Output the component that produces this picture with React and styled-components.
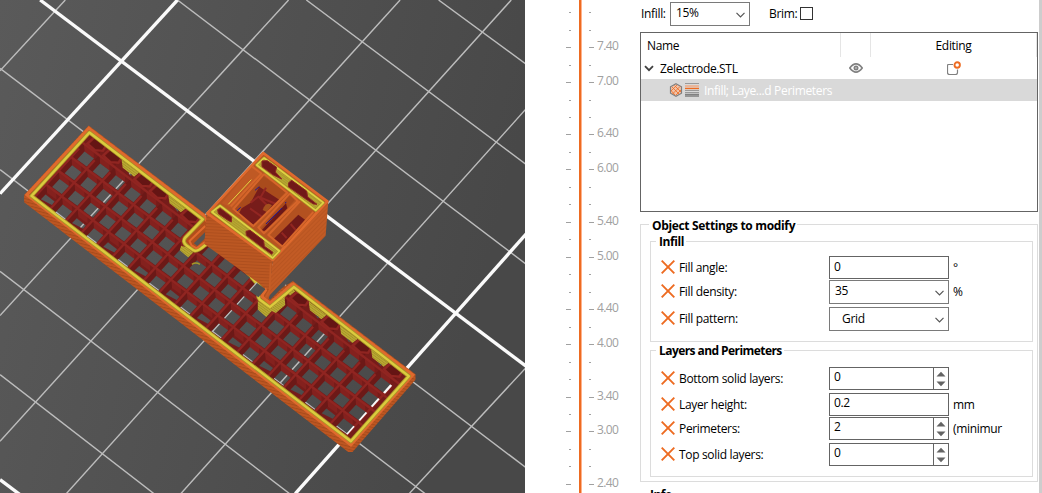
import React from "react";
import styled, { createGlobalStyle } from "styled-components";

const Global = createGlobalStyle`
  html, body { margin: 0; padding: 0; }
  body { font-family: "Open Sans", "Noto Sans", sans-serif; font-size: 12px; letter-spacing: -0.33px; color: #000; background: #fff; }
  * { box-sizing: border-box; }
`;
const Page = styled.div`display: flex; width: 1042px; height: 493px; overflow: hidden; background: #fff;`;
const Viewport = styled.div`flex: 0 0 525px; height: 493px; svg { display: block; }`;

/* ---------- layer slider ---------- */
const Slider = styled.div`flex: 0 0 115px; display: flex; height: 493px; padding-left: 41px;`;
const TickColumn = styled.div`
  display: flex; flex-direction: column; padding-top: 12px;
  width: ${p => (p.$left ? 13 : 51)}px; padding-left: ${p => (p.$left ? 0 : 7)}px;
`;
const TickRow = styled.div`
  flex: none; display: flex; align-items: flex-start; height: ${p => p.$h}px; padding-right: ${p => (p.$left ? 8 : 0)}px;
  justify-content: ${p => (p.$left ? "flex-end" : "flex-start")};
`;
const Tick = styled.i`flex: none; width: ${p => (p.$major ? 5 : 2)}px; height: 1px; background: #a0a0a0;`;
const TickLabel = styled.span`margin: -9px 0 0 3px; line-height: 16px; height: 16px; color: #a0a0a0; letter-spacing: -0.6px;`;
const Track = styled.div`flex: 0 0 3px; background: linear-gradient(90deg, #ed6b21 67%, #ffb28c 67%);`;

/* ---------- side panel ---------- */
const Panel = styled.div`flex: 0 0 398px; display: flex; flex-direction: column; height: 493px;`;
const Scrollbar = styled.div`flex: none; width: 3px; margin-left: 1px; background: #cdcdcd;`;
const TopBar = styled.div`display: flex; align-items: center; height: 32px; padding: 0 0 5px 1px; flex: none;`;
const TopLabel = styled.span`width: ${p => p.$w}px; padding-left: ${p => p.$pl || 0}px; white-space: nowrap;`;
const Box = styled.div`
  display: flex; align-items: center; flex: none; width: ${p => p.$w || 120}px; height: ${p => p.$h || 23}px;
  border: 1px solid ${p => (p.$combo ? "#7a7a7a" : "#646464")}; background: #fff; padding-left: ${p => p.$pl || 4}px;
`;
const Value = styled.span`flex: 1; line-height: 16px; margin-top: ${p => p.$dy || 0}px;`;
const Arrow = styled.svg`width: 9px; height: 6px; margin-right: 4px; margin-top: 2px;`;
const Check = styled.div`width: 13px; height: 13px; border: 1px solid #333; background: #fff;`;

const Tree = styled.div`flex: none; height: 180px; border: 1px solid #646464; display: flex; flex-direction: column;`;
const TreeRow = styled.div`
  display: flex; align-items: center; flex: none; height: ${p => p.$h}px;
  background: ${p => (p.$selected ? "#d9d9d9" : "#fff")}; color: ${p => (p.$selected ? "#fff" : "#000")};
`;
const NameCell = styled.div`flex: 0 0 200px; display: flex; align-items: center; height: 100%; white-space: nowrap; padding-left: ${p => p.$pl}px; border-right: 1px solid ${p => (p.$head ? "#e5e5e5" : "transparent")};`;
const EyeCell = styled.div`flex: 0 0 30px; display: flex; align-items: center; justify-content: center; height: 100%; border-right: 1px solid ${p => (p.$head ? "#e5e5e5" : "transparent")};`;
const EditCell = styled.div`flex: 1; display: flex; align-items: center; justify-content: center; height: 100%; border-right: 1px solid ${p => (p.$head ? "#e5e5e5" : "transparent")};`;
const Chevron = styled.svg`width: 10px; height: 7px; margin-right: 6px; flex: none;`;
const ModifierIcons = styled.svg`width: 30px; height: 14px; margin-right: 5px; flex: none;`;

const Group = styled.section`
  position: relative; flex: none; border: 1px solid #dcdcdc; height: ${p => p.$h}px;
  margin: ${p => p.$m || "0"}; padding-top: ${p => p.$pt || 0}px;
`;
const GroupTitle = styled.h3`
  position: absolute; left: ${p => p.$x}px; top: ${p => p.$top || -9}px; margin: 0; padding: 0 2px 0 3px; background: #fff;
  font-size: 12px; font-weight: 700; line-height: 17px; white-space: nowrap; letter-spacing: ${p => p.$ls || "-0.5px"};
`;
const Field = styled.div`display: flex; align-items: flex-start; height: ${p => p.$h}px; padding-left: 10px;`;
const FieldLabel = styled.span`flex: 0 0 154px; padding-left: 4px; line-height: 24px; white-space: nowrap;`;
const Cross = styled.svg`flex: none; width: 14px; height: 14px; margin-top: 4px;`;
const Unit = styled.span`margin-left: 4px; line-height: 24px; width: 50px; overflow: hidden; white-space: nowrap;`;
const Spin = styled.div`width: 15px; height: 100%; border-left: 1px solid #646464; display: flex; align-items: center; justify-content: center;`;
const NextTitle = styled.h3`margin: 4px 0 0 10px; font-size: 12px; line-height: 17px; font-weight: 700; letter-spacing: -0.5px;`;

const Down = () => <Arrow viewBox="0 0 9 6"><path d="M.5 .8 4.5 4.8 8.5 .8" fill="none" stroke="#555" strokeWidth="1.2" /></Arrow>;
const Remove = () => <Cross viewBox="0 0 14 14"><path d="M.7.7 13.3 13.3M13.3.7.7 13.3" stroke="#ed6b21" strokeWidth="1.9" /></Cross>;

const ticks = [[12], [30], [47, "7.40"], [65], [82, "7.00"], [100], [117], [134, "6.40"], [152], [169, "6.00"], [187], [204], [222, "5.40"], [239], [257, "5.00"], [274], [292], [309, "4.40"], [327], [344, "4.00"], [362], [379], [397, "3.40"], [414], [431, "3.00"], [449], [466], [484, "2.40"], [493]];
const Ticks = ({ left }) => (
  <TickColumn $left={left}>
    {ticks.slice(0, -1).map(([y, label], i) => (
      <TickRow key={y} $h={ticks[i + 1][0] - y} $left={left}>
        <Tick $major={!!label} />
        {!left && label && <TickLabel>{label}</TickLabel>}
      </TickRow>
    ))}
  </TickColumn>
);

const NumberField = ({ label, value, unit, h, spin, combo, boxH, pl, dy = 0 }) => (
  <Field $h={h}>
    <Remove />
    <FieldLabel>{label}</FieldLabel>
    <Box $h={boxH} $combo={combo} $pl={pl}>
      <Value $dy={dy}>{value}</Value>
      {combo && <Down />}
      {spin && <Spin><svg width="10" height="16" viewBox="0 0 10 16"><path d="M.5 5.5 5 .8 9.500 5.500zM.5 10.500 5 15.200 9.500 10.500z" fill="#646464" /></svg></Spin>}
    </Box>
    {unit && <Unit>{unit}</Unit>}
  </Field>
);

/* ---------- 3D preview ---------- */
const cellAt = (i, j) => [256 + 46.6 * i - 37.3 * j, 477 + 35.6 * i + 41 * j];
const poly = (c, pts) => pts.map(([x, y]) => `${(c[0] + x).toFixed(1)},${(c[1] + y).toFixed(1)}`).join(" ");
const cells = [];
for (let i = 0; i < 20; i++) for (let j = 0; j < 4; j++) if (!((i === 7 || i === 12) && j === 0)) cells.push([i, j]);
const HOLE = [[-3.5, -23], [24.5, -2], [3, 22], [-25.5, 1]];
const END_HOLE = [[-3.5, -23], [30, 2], [8.5, 26], [-25.5, 1]];
const LOW_HOLE = [[-8, -17], [19, 4], [11, 14], [-22, -3]];
const holeAt = (i, j) => (i === 19 ? END_HOLE : j === 3 && i % 2 === 0 ? LOW_HOLE : HOLE);
const pockets = [0, 1, 3, 4, 6, 13, 15, 17, 19];
const OUTER = "M265 376 L612 640 L640 700 L800 850 L800 890 L875 842 L1241 1121 L1241 1138 L1053 1354 L1040 1354 L72 606 L72 584Z";
const RIM = "M265 384 L609 646 L640 700 L800 850 L794 868 L782 888 L806 908 L876 851 L1233 1123 L1048 1333 L80 584Z";
const INNER = "M267 397 L606 657 L554 711 Q543 724 558 736 L578 750 Q588 756 612 735 L650 715 L782 866 L773 876 Q768 888 776 898 L806 920 L878 860 L1221 1127 L1048 1322 L94 587Z";
const thin = [
  [0, 205, 1575, 1404], [530, 0, 1575, 794], [915, 0, 1575, 495], [1310, 0, 1575, 195], [0, 508, 1270, 1479], [0, 813, 865, 1479], [0, 1122, 460, 1479],
  [195, 0, 0, 212], [862, 0, 0, 945], [1195, 0, 0, 1322], [1527, 0, 198, 1479], [1575, 322, 540, 1479], [1575, 1097, 1222, 1479],
];
const thick = [[120, 0, 1575, 1100], [530, 0, 0, 580], [1575, 697, 882, 1479], [0, 1437, 60, 1482]];

const Scene = () => (
  <svg width="525" height="493" viewBox="0 0 525 493">
    <defs>
      <linearGradient id="bed" x1="0" x2="1" y1="0" y2=".25"><stop offset="0" stopColor="#5a5a5a" /><stop offset="1" stopColor="#484848" /></linearGradient>
      <pattern id="sideA" width="12" height="9" patternUnits="userSpaceOnUse" patternTransform="rotate(14)"><rect width="12" height="9" fill="#bd5622" /><rect width="12" height="3" fill="#a84b1b" /></pattern>
      <pattern id="faceL" width="9" height="9" patternUnits="userSpaceOnUse" patternTransform="rotate(3)"><rect width="9" height="9" fill="#bb5722" /><rect width="9" height="3" fill="#ae4f1e" /></pattern>
      <pattern id="faceR" width="9" height="9" patternUnits="userSpaceOnUse" patternTransform="rotate(-45)"><rect width="9" height="9" fill="#c25b25" /><rect width="9" height="3" fill="#b85521" /></pattern>
      <pattern id="yel" width="6" height="6" patternUnits="userSpaceOnUse" patternTransform="rotate(36)"><rect width="6" height="6" fill="#b9a832" /><rect width="6" height="2" fill="#a39227" /></pattern>
      <mask id="holes" maskUnits="userSpaceOnUse" x="0" y="0" width="1575" height="1479">
        <rect width="1575" height="1479" fill="#fff" />
        {cells.map(([i, j]) => <polygon key={i + "-" + j} points={poly(cellAt(i, j), holeAt(i, j))} fill="#000" />)}
        {[2, 5, 14, 16, 18].map(i => <polygon key={i} points={poly(cellAt(i, -1), [[-5, 8], [8, 16], [4, 20]])} fill="#000" />)}
      </mask>
      <clipPath id="inside"><path d={INNER} /></clipPath>
    </defs>
    <rect width="525" height="493" fill="url(#bed)" />
    <g transform="scale(.3348 .3338)">
      {thin.map((l, k) => <line key={k} x1={l[0]} y1={l[1]} x2={l[2]} y2={l[3]} stroke="#bdbdbd" strokeWidth="4.200" />)}
      {thick.map((l, k) => <line key={k} x1={l[0]} y1={l[1]} x2={l[2]} y2={l[3]} stroke="#fafafa" strokeWidth="10" />)}
      <g mask="url(#holes)">
        <path d={OUTER} fill="url(#sideA)" />
        <path d={RIM} fill="#b04e1c" stroke="#df6a2d" strokeWidth="9" />
        <path d={INNER} fill="#761c1a" />
        <g clipPath="url(#inside)">
          {[2, 5, 7, 12, 14, 16, 18].map(i => <polygon key={i} points={poly(cellAt(i, -1), [[-24, -32], [30, 9], [14, 22], [-20, -5]])} fill="url(#yel)" />)}
          {cells.map(([i, j]) => (
            <g key={i + "-" + j}>
              <polygon points={poly(cellAt(i, j), [[-6, -49], [24, -26], [24.5, -1.5], [-3.5, -22]])} fill="#84211e" />
              <polygon points={poly(cellAt(i, j), [[-6, -49], [-3.5, -22], [-25.5, 1.5], [-43, -8]])} fill="#6c1917" />
            </g>
          ))}
          {pockets.map(i => <polygon key={i} points={poly(cellAt(i, -1), [[-6, -24], [24, -2], [4, 22], [-28, -2]])} fill="#651514" />)}
          <g stroke="#902521" strokeWidth="7" fill="none">
            {[-1, 0, 1, 2, 3].map(j => { const a = cellAt(-2, j), b = cellAt(21, j); return <line key={j} x1={a[0] - 14.5} y1={a[1] + 16} x2={b[0] - 14.5} y2={b[1] + 16} />; })}
            {Array.from({ length: 21 }, (_, k) => k - 1).map(i => { const a = cellAt(i, -0.25), b = cellAt(i, 4.3); return <line key={i} x1={a[0] + 17.5} y1={a[1] + 13.5} x2={b[0] + 17.5} y2={b[1] + 13.5} />; })}
            {pockets.map(i => <polygon key={i} points={poly(cellAt(i, -1), [[0, -24], [26, -4], [14, 16], [-10, 14], [-32, -6], [-14, -22]])} strokeWidth="7" />)}
          </g>
        </g>
        <path d={INNER} fill="none" stroke="#a79828" strokeWidth="12" strokeLinejoin="round" />
        <path d={INNER} fill="none" stroke="#dccb3e" strokeWidth="7" strokeLinejoin="round" />
      </g>
      <path d="M541 736 L537 750 L562 771 L577 757 L556 741Z" fill="url(#yel)" />
      <path d="M770 902 L770 927 L795 950 L812 932 L824 938 L852 914 L850 888 L808 924Z" fill="url(#yel)" />
      <path d="M613 672 L564 720 Q562 727 568 733 L587 744 L613 726Z" fill="#b04e1c" />
      <path d="M613 677 L566 722 L572 735 L587 744 L613 724" fill="none" stroke="#df6a2d" strokeWidth="6" strokeLinejoin="round" />
      <path d="M613 695 L579 729 L589 737 L613 714Z" fill="#555" />
      <path d="M800 862 L785 882 L806 900 L866 838Z" fill="#b04e1c" />
      <path d="M812 866 L798 889 L807 898 L866 839 L850 820Z" fill="#515151" />
      <path d="M796 868 L782 888 L806 909 L872 849" fill="none" stroke="#df6a2d" strokeWidth="6" strokeLinejoin="round" />
      <path d="M573 792 Q585 784 597 792" fill="none" stroke="#a79828" strokeWidth="4" />
    </g>
    <g transform="translate(170 140) scale(.3333)">
      <path d="M110 220 L308 362 L300 450 L288 445 L103 312Z" fill="url(#faceL)" />
      <path d="M308 362 L475 184 L467 287 L300 465 L294 478 L282 470 L298 448Z" fill="url(#faceR)" />
      <path d="M280 39 L472 184 L308 360 L112 220Z" fill="#b75421" stroke="#df6a2d" strokeWidth="8" strokeLinejoin="round" />
      <path d="M247 80 L270 100 L187 205 L155 190Z" fill="#bf5924" />
      <path d="M280 108 L346 156 L252 258 L188 211Z" fill="#a94b1c" />
      <path d="M268 140 L329 180 L252 256 L205 224 L215 205 L242 188Z" fill="#771c1a" />
      <path d="M288 143 L270 175 L300 205M240 205 L275 230M242 188 L265 170 L318 192" stroke="#922622" strokeWidth="6" fill="none" />
      <path d="M278 210 Q288 182 306 196 L290 216Z" fill="#a4501e" />
      <path d="M358 165 L374 181 L290 272 L270 270Z" fill="#a94a1c" />
      <path d="M348 190 L352 205 L286 272 L274 272Z" fill="#6b1718" />
      <path d="M288 252 L336 204M345 189 L349 187M255 151 L268 140M198 215 L212 202" stroke="#1c1896" strokeWidth="3" />
      <path d="M388 186 L430 222 L344 318 L300 288Z" fill="#b35120" />
      <path d="M385 224 L407 241 L338 320 L312 296Z" fill="#701918" />
      <path d="M362 252 L377 270M335 278 L350 294" stroke="#922622" strokeWidth="6" />
      <path d="M247 80 L274 101 L182 199M282 102 L190 207 L250 258 L352 158 L282 102M360 160 L265 262 L282 280 L383 183 L360 160M390 184 L295 285 L340 322M430 216 L335 322" fill="none" stroke="#d5652a" strokeWidth="6" strokeLinejoin="round" />
      <path d="M244 119 L175 193" stroke="#e2d43f" strokeWidth="3" />
      <path d="M282 54 L460 188 L437 211 L260 75Z" fill="url(#yel)" stroke="#a79828" strokeWidth="9" strokeLinejoin="round" />
      <path d="M282 54 L460 188 L437 211 L260 75Z" fill="none" stroke="#e0d144" strokeWidth="5" strokeLinejoin="round" />
      <path d="M150 197 L328 333 L308 354 L126 216Z" fill="url(#yel)" stroke="#a79828" strokeWidth="9" strokeLinejoin="round" />
      <path d="M150 197 L328 333 L308 354 L126 216Z" fill="none" stroke="#e0d144" strokeWidth="5" strokeLinejoin="round" />
      <g fill="#711918" stroke="#8f2622" strokeWidth="3">
        <path d="M276 63 L292 62 L320 82 L316 96 L335 117 L310 105 L276 80Z" />
        <path d="M356 128 L365 121 L410 153 L413 171 L441 193 L430 192 L406 176 L355 140Z" />
        <path d="M143 209 L151 205 L185 231 L184 246 L174 241 L145 221Z" />
        <path d="M228 274 L240 271 L281 302 L283 319 L309 337 L305 343 L275 321 L229 286Z" />
      </g>
      <path d="M302 370 L299 450 L288 471" fill="none" stroke="#c65e26" strokeWidth="5" />
    </g>
  </svg>
);

export default function App() {
  return (
    <Page>
      <Global />
      <Viewport><Scene /></Viewport>
      <Slider><Ticks left /><Track /><Ticks /></Slider>
      <Panel>
        <TopBar>
          <TopLabel $w={29}>Infill:</TopLabel>
          <Box $w={80} $h={24} $combo $pl={5}><Value $dy={-2}>15%</Value><Down /></Box>
          <TopLabel $w={50} $pl={19}>Brim:</TopLabel>
          <Check />
        </TopBar>
        <Tree>
          <TreeRow $h={24}><NameCell $head $pl={6}>Name</NameCell><EyeCell $head /><EditCell $head>Editing</EditCell></TreeRow>
          <TreeRow $h={22}>
            <NameCell $pl={3}>
              <Chevron viewBox="0 0 10 7"><path d="M1 1.200 5 5.200 9 1.200" fill="none" stroke="#404040" strokeWidth="1.800" /></Chevron>
              Zelectrode.STL
            </NameCell>
            <EyeCell><svg width="14" height="10" viewBox="0 0 14 10"><path d="M.8 5Q7-3.200 13.200 5 7 13.200.8 5Z" fill="none" stroke="#808080" strokeWidth="1.700" /><circle cx="7" cy="5" r="2.500" fill="#808080" /><circle cx="7" cy="5" r=".8" fill="#ddd" /></svg></EyeCell>
            <EditCell><svg width="14" height="14" viewBox="0 0 14 14"><path d="M6 3.500H1.500Q.5 3.500 .5 4.500V11.500Q.5 13.500 2.500 13.500H8.500Q10.500 13.500 10.500 11.500V8.500" fill="none" stroke="#808080" strokeWidth="1.200" /><circle cx="10.200" cy="4" r="2.700" fill="#fff" stroke="#ed6b21" strokeWidth="1.900" /></svg></EditCell>
          </TreeRow>
          <TreeRow $h={22} $selected>
            <NameCell $pl={28}>
              <ModifierIcons viewBox="0 0 30 14">
                <path d="M7 .8 12.500 3.800V10.200L7 13.200 1.500 10.200V3.800Z" fill="#f0c3aa" stroke="#808080" strokeWidth="1.200" />
                <path d="M3 4 10 11M5.500 2.500 12 9M2.500 8 6 12M11 3.500 3.500 11M8 2 2 8M12 7 7 12" stroke="#ed6b21" strokeWidth=".8" />
                <path d="M16 .5H30M16 7.500H30M16 9.500H30" stroke="#999" />
                <path d="M16 2.500H30" stroke="#e9b79b" />
                <path d="M16 3.800H30" stroke="#f3a276" strokeWidth=".9" />
                <path d="M16 5.500H30" stroke="#ed6b21" strokeWidth="1.300" />
                <path d="M16 11.500H30M16 13.200H30" stroke="#808080" strokeWidth="1.300" />
              </ModifierIcons>
              Infill; Laye...d Perimeters
            </NameCell>
          </TreeRow>
        </Tree>
        <Group $h={258} $m="12px 0 0">
          <GroupTitle $x={8} $top={-8} $ls="-0.34px">Object Settings to modify</GroupTitle>
          <Group $h={101} $m="16px 4px 0 9px" $pt={14}>
            <GroupTitle $x={5} $ls="-0.4px">Infill</GroupTitle>
            <NumberField h={24} label="Fill angle:" value="0" unit="°" dy={-2} />
            <NumberField h={27} label="Fill density:" value="35" unit="%" combo boxH={24} pl={5} dy={-2} />
            <NumberField h={25} label="Fill pattern:" value="Grid" combo boxH={24} pl={12} />
          </Group>
          <Group $h={127} $m="8px 4px 0 9px" $pt={16}>
            <GroupTitle $x={5} $ls="-0.57px">Layers and Perimeters</GroupTitle>
            <NumberField h={26} label="Bottom solid layers:" value="0" spin dy={-3} />
            <NumberField h={24} label="Layer height:" value="0.2" unit="mm" dy={-3} />
            <NumberField h={26} label="Perimeters:" value="2" unit="(minimur" spin dy={-3} />
            <NumberField h={24} label="Top solid layers:" value="0" spin dy={-3} />
          </Group>
        </Group>
        <NextTitle>Info</NextTitle>
      </Panel>
      <Scrollbar />
    </Page>
  );
}
